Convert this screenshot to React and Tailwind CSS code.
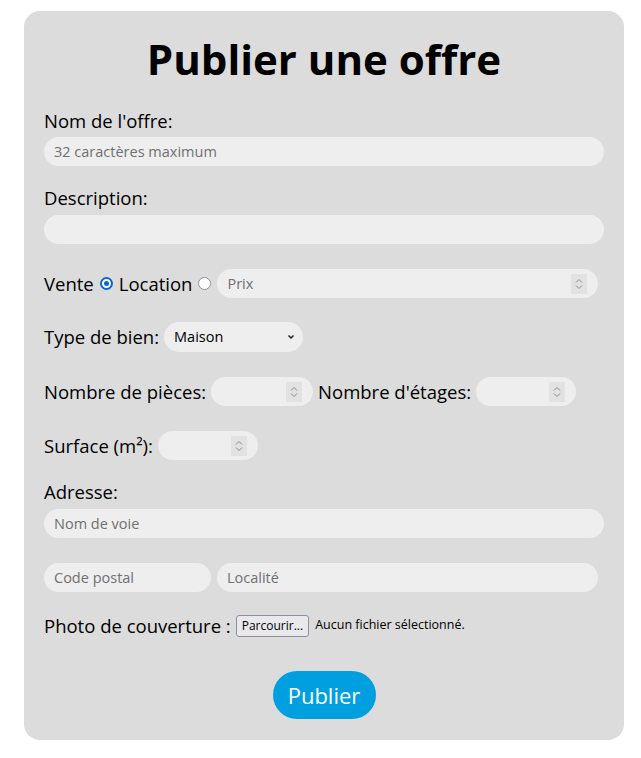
import React, { useState } from 'react';

const Spinner = () => (
  <span className="flex h-[20px] w-[16px] items-center justify-center bg-[#e2e2e2]">
    <svg width="8" height="12" viewBox="0 0 8 12" fill="none" stroke="#8a8a8a" strokeWidth="1">
      <path d="M1 4.5 L4 1.5 L7 4.5" />
      <path d="M1 7.5 L4 10.5 L7 7.5" />
    </svg>
  </span>
);

const NumberField = ({ className = '', placeholder = '' }) => (
  <div className={`flex h-[29px] items-center rounded-full bg-[#eeeeee] pl-[10px] pr-[11px] ${className}`}>
    <input
      type="text"
      placeholder={placeholder}
      className="min-w-0 flex-1 bg-transparent text-[14.5px] text-black outline-none placeholder:text-[#707070]"
    />
    <Spinner />
  </div>
);

const TextField = ({ className = '', placeholder = '' }) => (
  <input
    type="text"
    placeholder={placeholder}
    className={`h-[29px] rounded-full bg-[#eeeeee] px-[10px] text-[14.5px] text-black outline-none placeholder:text-[#707070] ${className}`}
  />
);

const Radio = ({ checked, onClick }) => (
  <span
    onClick={onClick}
    className={`mx-[6px] inline-flex h-[13px] w-[13px] items-center justify-center rounded-full ${
      checked ? 'border-2 border-[#0a66d8] bg-white' : 'border border-[#8f8f9d] bg-white'
    }`}
  >
    {checked && <span className="h-[5px] w-[5px] rounded-full bg-[#0a66d8]" />}
  </span>
);

export default function App() {
  const [mode, setMode] = useState('vente');

  return (
    <div className="min-h-screen bg-white pt-[11px] pl-[24px]" style={{ fontFamily: '"Open Sans", "Noto Sans", sans-serif' }}>
      <form
        onSubmit={(e) => e.preventDefault()}
        className="flex w-[600px] flex-col rounded-[16px] bg-[#dcdcdc] px-[20px] pb-[21px] pt-[22px] text-[18.5px] text-black"
      >
        <h1 className="text-center text-[42px] font-bold leading-[52px]">Publier une offre</h1>

        <label className="mt-[26px] leading-[20px]">Nom de l'offre:</label>
        <TextField className="mt-[6px] w-[560px]" placeholder="32 caractères maximum" />

        <label className="mt-[22px] leading-[20px]">Description:</label>
        <TextField className="mt-[7px] w-[560px]" />

        <div className="mt-[25px] flex h-[29px] items-center">
          <span>Vente</span>
          <Radio checked={mode === 'vente'} onClick={() => setMode('vente')} />
          <span>Location</span>
          <Radio checked={mode === 'location'} onClick={() => setMode('location')} />
          <NumberField className="w-[381px]" placeholder="Prix" />
        </div>

        <div className="mt-[24px] flex h-[30px] items-center">
          <span className="mr-[5px]">Type de bien:</span>
          <div className="flex h-[30px] w-[139px] items-center rounded-full bg-[#eeeeee] pl-[10px] pr-[8px]">
            <span className="flex-1 text-[14.5px]">Maison</span>
            <svg width="8" height="8" viewBox="0 0 8 8" fill="none" stroke="#222" strokeWidth="1.5">
              <path d="M1.5 2.5 L4 5 L6.5 2.5" />
            </svg>
          </div>
        </div>

        <div className="mt-[25px] flex h-[29px] items-center">
          <span className="mr-[5px]">Nombre de pièces:</span>
          <NumberField className="w-[102px]" />
          <span className="ml-[5px] mr-[5px]">Nombre d'étages:</span>
          <NumberField className="w-[100px]" />
        </div>

        <div className="mt-[25px] flex h-[29px] items-center">
          <span className="mr-[5px]">Surface (m²):</span>
          <NumberField className="w-[100px]" />
        </div>

        <label className="mt-[22px] leading-[20px]">Adresse:</label>
        <TextField className="mt-[7px] w-[560px]" placeholder="Nom de voie" />

        <div className="mt-[25px] flex gap-[6px]">
          <TextField className="w-[167px]" placeholder="Code postal" />
          <TextField className="w-[381px]" placeholder="Localité" />
        </div>

        <div className="mt-[22px] flex h-[23px] items-center">
          <span className="mr-[5px]">Photo de couverture :</span>
          <span className="flex h-[22px] items-center rounded-[3px] border border-[#8f8f9d] bg-[#e9e9ed] px-[5px] text-[12px]">
            Parcourir...
          </span>
          <span className="ml-[6px] text-[12.5px]">Aucun fichier sélectionné.</span>
        </div>

        <div className="mt-[34px] flex justify-center">
          <button type="submit" className="h-[48px] w-[103px] rounded-full bg-[#009fe0] text-[22px] text-white">
            Publier
          </button>
        </div>
      </form>
    </div>
  );
}
